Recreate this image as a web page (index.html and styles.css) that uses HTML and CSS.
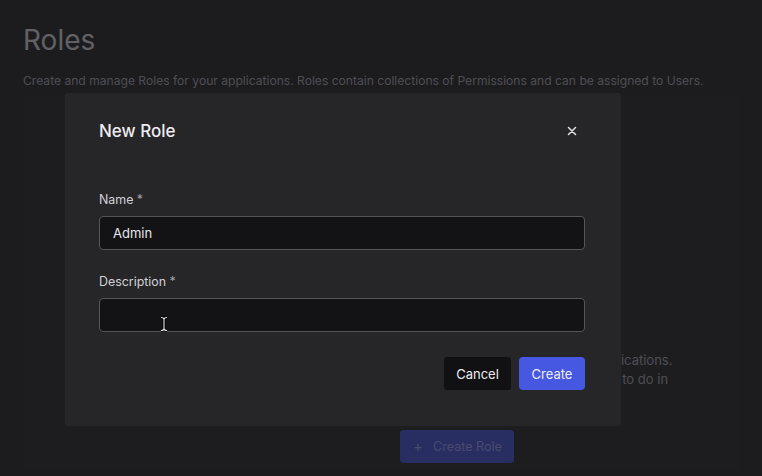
FILE: index.html
```html
<!DOCTYPE html>
<html lang="en">
<head>
    <meta charset="UTF-8">
    <title>Roles</title>
    <link rel="stylesheet" href="styles.css">
</head>
<body>
<div class="page">
    <h1 class="page-title">Roles</h1>
    <p class="page-desc">Create and manage Roles for your applications. Roles contain collections of Permissions and can be assigned to Users.</p>
    <div class="card">
        <div class="empty">
            <div class="empty-icon"></div>
            <h2 class="empty-title">No Roles yet</h2>
            <p class="empty-text">Roles are named collections of Permissions used by your applications.<br>Assign them to your Users to control what they are permitted to do in<br>each application.</p>
            <button class="btn-add"><span class="plus">+</span>Create Role</button>
        </div>
    </div>
</div>

<div class="overlay">
    <div class="modal">
        <div class="modal-head">
            <h3 class="modal-title">New Role</h3>
            <button class="close">
                <svg width="10" height="10" viewBox="0 0 10 10"><path d="M1.5 1.5L8.5 8.5M8.5 1.5L1.5 8.5" stroke="#e4e4e8" stroke-width="1.5" stroke-linecap="round"/></svg>
            </button>
        </div>
        <form class="form">
            <div class="field">
                <label>Name <span class="req">*</span></label>
                <input type="text" value="Admin">
            </div>
            <div class="field">
                <label>Description <span class="req">*</span></label>
                <div class="input-wrap">
                    <input type="text" value="">
                    <svg class="ibeam" width="10" height="16" viewBox="0 0 10 16"><path d="M2 1.5Q5 1.5 5 3.5V12.5Q5 14.5 2 14.5M8 1.5Q5 1.5 5 3.5M5 12.5Q5 14.5 8 14.5" fill="none" stroke="#000" stroke-width="3"/><path d="M2 1.5Q5 1.5 5 3.5V12.5Q5 14.5 2 14.5M8 1.5Q5 1.5 5 3.5M5 12.5Q5 14.5 8 14.5" fill="none" stroke="#e8e8e8" stroke-width="1.1"/></svg>
                </div>
            </div>
            <div class="actions">
                <button type="button" class="btn btn-cancel">Cancel</button>
                <button type="button" class="btn btn-create">Create</button>
            </div>
        </form>
    </div>
</div>
</body>
</html>
```

FILE: styles.css
```css
* {
    margin: 0;
    padding: 0;
    box-sizing: border-box;
}

html, body {
    height: 100%;
}

body {
    background-color: #2b2a2e;
    font-family: Inter, "Noto Sans", sans-serif;
    overflow: hidden;
}

.page {
    height: 100%;
    padding: 23px 22px 6px 23px;
    display: flex;
    flex-direction: column;
}

.page-title {
    font-size: 28px;
    line-height: 34px;
    font-weight: 400;
    color: #a8a8ae;
}

.page-desc {
    margin-top: 15px;
    font-size: 12.1px;
    line-height: 18px;
    color: #85858b;
}

.card {
    margin-top: 5px;
    flex: 1;
    background-color: #2d2c30;
    border-radius: 6px;
    padding: 162px 0 0 150px;
}

.empty {
    display: flex;
    flex-direction: column;
    align-items: center;
}

.empty-icon {
    width: 44px;
    height: 44px;
    border-radius: 50%;
    background-color: #3b3a40;
    margin-bottom: 16px;
}

.empty-title {
    font-size: 17px;
    line-height: 24px;
    font-weight: 500;
    color: #a8a8ae;
    margin-bottom: 10px;
}

.empty-text {
    font-size: 13px;
    line-height: 19px;
    color: #85858b;
    text-align: center;
}

.btn-add {
    margin-top: 22px;
    width: 114px;
    height: 33px;
    border: none;
    border-radius: 4px;
    background-color: #414aa8;
    color: #7a80bc;
    font-family: inherit;
    font-size: 12.6px;
    display: flex;
    align-items: center;
    justify-content: center;
    gap: 10px;
    padding-left: 2px;
}

.plus {
    font-size: 15px;
}

.overlay {
    position: fixed;
    inset: 0;
    background-color: rgba(12, 12, 14, .45);
    padding: 93px 0 0 65px;
}

.modal {
    width: 556px;
    height: 333px;
    background-color: #262528;
    border-radius: 3px;
    padding: 24px 36px 36px 34px;
}

.modal-head {
    height: 28px;
    display: flex;
    align-items: center;
    justify-content: space-between;
}

.modal-title {
    font-size: 17px;
    font-weight: 500;
    color: #ececf0;
}

.close {
    width: 24px;
    height: 24px;
    margin-right: 1px;
    border: none;
    background: none;
    display: flex;
    align-items: center;
    justify-content: center;
}

.form {
    margin-top: 46px;
}

.field {
    margin-bottom: 23px;
}

.field label {
    display: block;
    font-size: 12.4px;
    line-height: 17px;
    font-weight: 400;
    color: #d2d2d6;
    margin-bottom: 8px;
}

.req {
    color: #a0a0a6;
}

.field input {
    width: 100%;
    height: 34px;
    background-color: #131215;
    border: 1px solid #56555b;
    border-radius: 4px;
    padding: 0 13px;
    font-family: inherit;
    font-size: 13px;
    color: #e6e6ea;
    outline: none;
}

.input-wrap {
    position: relative;
}

.ibeam {
    position: absolute;
    left: 60px;
    top: 18px;
}

.actions {
    margin-top: 25px;
    display: flex;
    justify-content: flex-end;
    gap: 8px;
}

.btn {
    height: 33px;
    border: none;
    border-radius: 3px;
    font-family: inherit;
    font-size: 13px;
    color: #ececf0;
}

.btn-cancel {
    width: 67px;
    background-color: #111013;
}

.btn-create {
    width: 66px;
    background-color: #4658e2;
    border-radius: 4px;
}
```
